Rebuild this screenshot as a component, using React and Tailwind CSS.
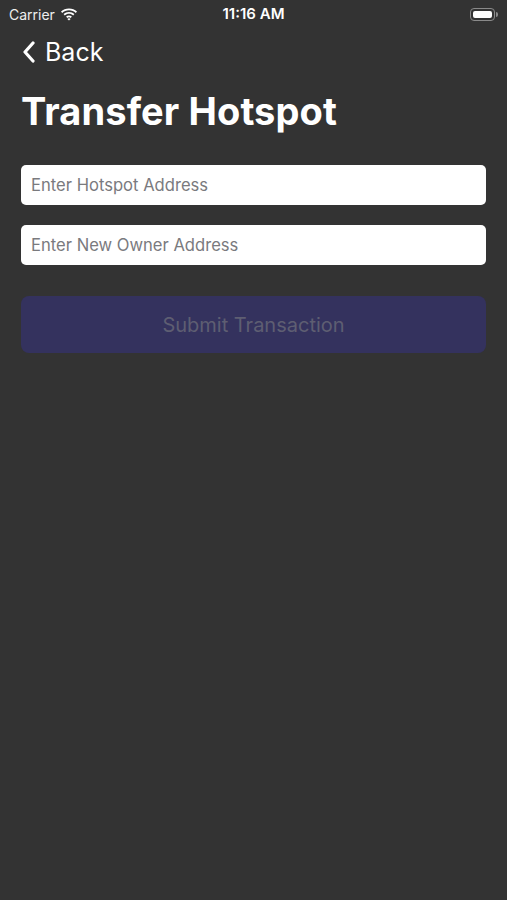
import React from "react";

function Wifi() {
  return (
    <svg width="18" height="13" viewBox="0 0 18 13" fill="#fff">
      <path d="M9 2.2c2.6 0 5 1 6.8 2.7l1.2-1.3C14.9 1.6 12.1.4 9 .4S3.1 1.6 1 3.6l1.2 1.3C4 3.2 6.4 2.2 9 2.2z" />
      <path d="M9 5.8c1.6 0 3 .6 4.2 1.6l1.2-1.3C13 4.8 11.1 4 9 4S5 4.8 3.6 6.1l1.2 1.3C6 6.4 7.4 5.8 9 5.8z" />
      <path d="M9 9.3c.7 0 1.3.2 1.7.6l1.2-1.3C11.1 7.9 10.1 7.5 9 7.5s-2.1.4-2.9 1.1l1.2 1.3c.4-.4 1-.6 1.7-.6z" />
      <path d="M9 12.6l1.6-1.7c-.4-.4-1-.6-1.6-.6s-1.2.2-1.6.6z" />
    </svg>
  );
}

function Battery() {
  return (
    <div className="flex items-center">
      <div className="w-[25px] h-[13px] rounded-[4px] border border-[#8a8a8a] p-[2px]">
        <div className="w-full h-full rounded-[2px] bg-white" />
      </div>
      <div className="w-[2px] h-[5px] rounded-r-sm bg-[#8a8a8a] ml-[1px]" />
    </div>
  );
}

export default function App() {
  return (
    <div
      className="w-[507px] h-[900px] bg-[#333333] text-white flex flex-col"
      style={{ fontFamily: "Inter, 'Liberation Sans', sans-serif" }}
    >
      <div className="h-[28px] flex items-center justify-between px-[9px] relative">
        <div className="flex items-center gap-[5px]">
          <span className="text-[14px] text-[#eeeeee]">Carrier</span>
          <Wifi />
        </div>
        <span className="absolute left-1/2 -translate-x-1/2 text-[15px] font-semibold">11:16 AM</span>
        <div>
          <Battery />
        </div>
      </div>
      <div className="h-[48px] flex items-center pl-[22px] gap-[9px]">
        <svg width="14" height="22" viewBox="0 0 14 22">
          <path d="M11 2 L3 11 L11 20" fill="none" stroke="#fff" strokeWidth="3.2" strokeLinecap="round" strokeLinejoin="round" />
        </svg>
        <span className="text-[25px] leading-none">Back</span>
      </div>
      <div className="px-[21px] pt-[16px]">
        <h1 className="text-[38px] font-bold leading-none tracking-[0.1px]">Transfer Hotspot</h1>
      </div>
      <div className="px-[21px] mt-[35px] flex flex-col gap-[20px]">
        <div className="h-[40px] bg-white rounded-[5px] flex items-center px-[10px]">
          <span className="text-[16.6px] text-[#7a7a7e]">Enter Hotspot Address</span>
        </div>
        <div className="h-[40px] bg-white rounded-[5px] flex items-center px-[10px]">
          <span className="text-[16.6px] text-[#7a7a7e]">Enter New Owner Address</span>
        </div>
        <div className="h-[57px] mt-[11px] bg-[#34325e] rounded-[8px] flex items-center justify-center">
          <span className="text-[20px] text-[#5e5e72]">Submit Transaction</span>
        </div>
      </div>
    </div>
  );
}
